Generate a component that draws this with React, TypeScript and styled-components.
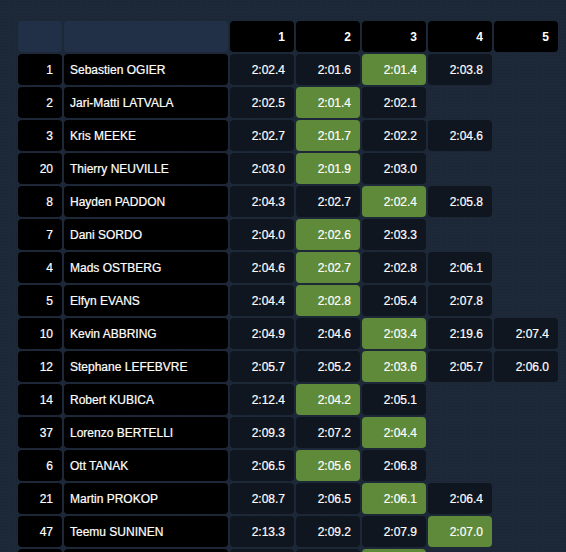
import React from "react";
import styled, { createGlobalStyle } from "styled-components";

const Global = createGlobalStyle`
  html, body {
    margin: 0;
    padding: 0;
    height: 552px;
    overflow: hidden;
    background-color: #1d2939;
    background-image: radial-gradient(rgba(0, 0, 0, 0.14) 0.8px, transparent 1px);
    background-size: 3px 3px;
  }
  body {
    font-family: "Liberation Sans", Arial, Helvetica, sans-serif;
  }
`;

const Page = styled.div`
  padding: 21px 0 0 18px;
`;

const Board = styled.div`
  display: grid;
  grid-template-columns: 44px 164px repeat(5, 64px);
  grid-auto-rows: 31px;
  column-gap: 2px;
  row-gap: 2px;
`;

type Kind = "blank" | "head" | "dark" | "time" | "best" | "none";

const bg: Record<Kind, string> = {
  blank: "#213046",
  head: "#000000",
  dark: "#000000",
  time: "#0f161f",
  best: "#5e8a3a",
  none: "transparent",
};

const Cell = styled.div<{ $kind: Kind; $align?: "left" | "right" }>`
  display: flex;
  align-items: center;
  justify-content: ${(p) => (p.$align === "left" ? "flex-start" : "flex-end")};
  padding: ${(p) => (p.$align === "left" ? "0 6px" : "0 9px 0 6px")};
  border-radius: 4px;
  background: ${(p) => bg[p.$kind]};
  color: #ffffff;
  font-size: 12px;
  font-weight: ${(p) => (p.$kind === "head" ? 700 : 400)};
  -webkit-text-stroke: ${(p) => (p.$kind === "head" ? "0" : "0.2px #ffffff")};
  white-space: nowrap;
`;

type Row = { no: number | null; name: string; times: string[]; best: number };

const rows: Row[] = [
  { no: 1, name: "Sebastien OGIER", times: ["2:02.4", "2:01.6", "2:01.4", "2:03.8"], best: 2 },
  { no: 2, name: "Jari-Matti LATVALA", times: ["2:02.5", "2:01.4", "2:02.1"], best: 1 },
  { no: 3, name: "Kris MEEKE", times: ["2:02.7", "2:01.7", "2:02.2", "2:04.6"], best: 1 },
  { no: 20, name: "Thierry NEUVILLE", times: ["2:03.0", "2:01.9", "2:03.0"], best: 1 },
  { no: 8, name: "Hayden PADDON", times: ["2:04.3", "2:02.7", "2:02.4", "2:05.8"], best: 2 },
  { no: 7, name: "Dani SORDO", times: ["2:04.0", "2:02.6", "2:03.3"], best: 1 },
  { no: 4, name: "Mads OSTBERG", times: ["2:04.6", "2:02.7", "2:02.8", "2:06.1"], best: 1 },
  { no: 5, name: "Elfyn EVANS", times: ["2:04.4", "2:02.8", "2:05.4", "2:07.8"], best: 1 },
  { no: 10, name: "Kevin ABBRING", times: ["2:04.9", "2:04.6", "2:03.4", "2:19.6", "2:07.4"], best: 2 },
  { no: 12, name: "Stephane LEFEBVRE", times: ["2:05.7", "2:05.2", "2:03.6", "2:05.7", "2:06.0"], best: 2 },
  { no: 14, name: "Robert KUBICA", times: ["2:12.4", "2:04.2", "2:05.1"], best: 1 },
  { no: 37, name: "Lorenzo BERTELLI", times: ["2:09.3", "2:07.2", "2:04.4"], best: 2 },
  { no: 6, name: "Ott TANAK", times: ["2:06.5", "2:05.6", "2:06.8"], best: 1 },
  { no: 21, name: "Martin PROKOP", times: ["2:08.7", "2:06.5", "2:06.1", "2:06.4"], best: 2 },
  { no: 47, name: "Teemu SUNINEN", times: ["2:13.3", "2:09.2", "2:07.9", "2:07.0"], best: 3 },
  { no: null, name: "", times: [" ", " ", " "], best: 2 },
];

export default function App() {
  return (
    <>
      <Global />
      <Page>
        <Board>
          <Cell $kind="blank" />
          <Cell $kind="blank" />
          {[1, 2, 3, 4, 5].map((n) => (
            <Cell key={n} $kind="head">
              {n}
            </Cell>
          ))}
          {rows.map((r, ri) => (
            <React.Fragment key={ri}>
              <Cell $kind="dark">{r.no}</Cell>
              <Cell $kind="dark" $align="left">
                {r.name}
              </Cell>
              {[0, 1, 2, 3, 4].map((i) => {
                const t = r.times[i];
                const kind: Kind = !t ? "none" : i === r.best ? "best" : "time";
                return (
                  <Cell key={i} $kind={kind}>
                    {t && t.trim() ? t : null}
                  </Cell>
                );
              })}
            </React.Fragment>
          ))}
        </Board>
      </Page>
    </>
  );
}
